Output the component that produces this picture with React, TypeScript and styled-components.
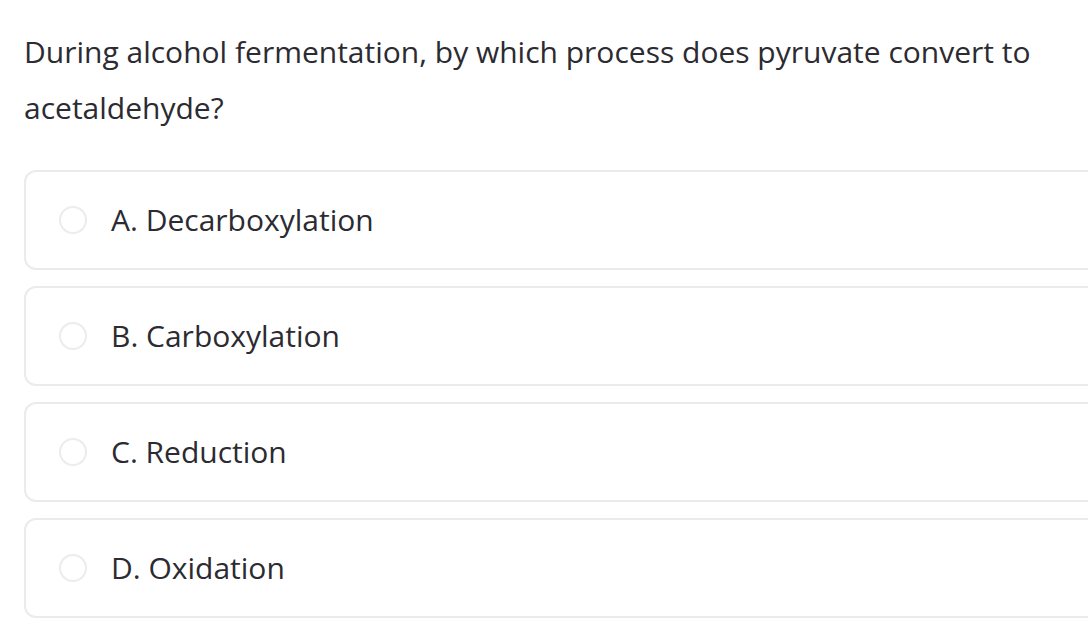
import * as React from 'react'
import styled, { createGlobalStyle } from 'styled-components'

const GlobalStyle = createGlobalStyle`
  html, body {
    margin: 0;
    padding: 0;
    background: #ffffff;
    overflow: hidden;
  }
  body {
    font-family: "Open Sans", Arial, sans-serif;
    color: #2b2b31;
  }
`

const Page = styled.div`
  padding: 24px 0 0 24px;
`

const Question = styled.h1`
  margin: 0;
  font-size: 30px;
  font-weight: 400;
  line-height: 56px;
  color: #2b2b31;
`

const Options = styled.div`
  display: flex;
  flex-direction: column;
  gap: 16px;
  margin-top: 34px;
  width: 1100px;
`

const Option = styled.label`
  display: flex;
  align-items: center;
  gap: 24px;
  height: 100px;
  box-sizing: border-box;
  padding: 0 0 2px 33px;
  border: 2px solid #ebebee;
  border-radius: 12px;
  cursor: pointer;
`

const Radio = styled.span`
  flex: none;
  width: 28px;
  height: 28px;
  margin-top: 2px;
  box-sizing: border-box;
  border: 2px solid #ececf0;
  border-radius: 50%;
`

const OptionText = styled.span`
  font-size: 30px;
  color: #2b2b31;
`

const answers = [
  'A. Decarboxylation',
  'B. Carboxylation',
  'C. Reduction',
  'D. Oxidation',
]

export default function App() {
  return (
    <>
      <GlobalStyle />
      <Page>
        <Question>
          During alcohol fermentation, by which process does pyruvate convert to acetaldehyde?
        </Question>
        <Options>
          {answers.map((a) => (
            <Option key={a}>
              <Radio />
              <OptionText>{a}</OptionText>
            </Option>
          ))}
        </Options>
      </Page>
    </>
  )
}
